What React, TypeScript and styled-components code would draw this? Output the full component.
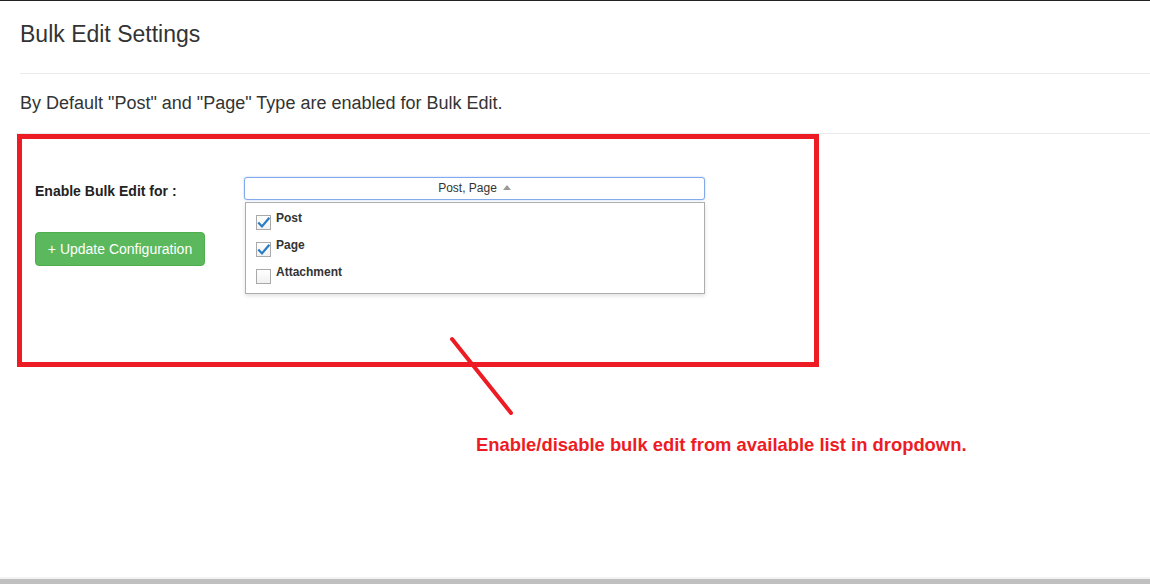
import React from "react";
import styled, { createGlobalStyle } from "styled-components";

const GlobalStyle = createGlobalStyle`
  html, body { margin: 0; padding: 0; background: #ffffff; }
  body { font-family: "Liberation Sans", Arial, sans-serif; color: #333; }
  * { box-sizing: border-box; }
`;

const Page = styled.div`
  position: relative;
  height: 584px;
  border-top: 1px solid #222;
  display: flex;
  flex-direction: column;
  overflow: hidden;
`;

const Title = styled.h1`
  margin: 20px 0 0 20px;
  font-size: 23px;
  line-height: 26px;
  font-weight: 400;
  color: #333;
`;

const Divider = styled.div<{ $top: number; $left: number }>`
  height: 1px;
  background: #eaeaea;
  margin-top: ${(p) => p.$top}px;
  margin-left: ${(p) => p.$left}px;
`;

const Intro = styled.p`
  margin: 18px 0 0 20px;
  font-size: 18px;
  line-height: 22px;
  color: #333;
`;

const HighlightBox = styled.section`
  margin-left: 17px;
  width: 802px;
  height: 233px;
  border: 5px solid #ed1c24;
  display: flex;
`;

const LeftColumn = styled.div`
  width: 222px;
  padding-left: 13px;
  display: flex;
  flex-direction: column;
  align-items: flex-start;
`;

const FieldLabel = styled.label`
  margin-top: 42px;
  font-size: 14px;
  line-height: 20px;
  font-weight: 700;
  color: #222;
`;

const UpdateButton = styled.button`
  margin-top: 31px;
  width: 170px;
  height: 34px;
  border: 1px solid #4cae4c;
  border-radius: 4px;
  background: #5cb85c;
  color: #fff;
  font-family: "Liberation Sans", Arial, sans-serif;
  font-size: 14px;
  padding: 0;
  cursor: pointer;
`;

const SelectWrap = styled.div`
  position: relative;
  padding-top: 38px;
  width: 461px;
`;

const SelectButton = styled.button`
  width: 461px;
  height: 23px;
  border: 1px solid #82a9ea;
  border-radius: 3px;
  box-shadow: 0 0 2px rgba(110, 160, 235, 0.55);
  background: #fff;
  display: flex;
  align-items: center;
  justify-content: center;
  gap: 6px;
  padding: 0 0 2px 0;
  font-family: "Liberation Sans", Arial, sans-serif;
  font-size: 12px;
  color: #333;
`;

const Caret = styled.span`
  width: 0;
  height: 0;
  border-left: 4.5px solid transparent;
  border-right: 4.5px solid transparent;
  border-bottom: 5px solid #9a9a9a;
`;

const Menu = styled.ul`
  position: absolute;
  top: 63px;
  left: 1px;
  width: 460px;
  height: 92px;
  margin: 0;
  padding: 8px 10px 9px 10px;
  list-style: none;
  background: #fff;
  border: 1px solid #adadad;
  box-shadow: 0 2px 4px rgba(0, 0, 0, 0.12);
  display: flex;
  flex-direction: column;
  gap: 8px;
`;

const MenuItem = styled.li`
  display: flex;
  align-items: flex-start;
  gap: 5px;
  height: 19px;
`;

const Box = styled.span<{ $checked: boolean }>`
  margin-top: 4px;
  width: 15px;
  height: 15px;
  border: 1px solid #a9a9a9;
  background: linear-gradient(#ffffff, #f1f1f1);
  display: flex;
  align-items: center;
  justify-content: center;
`;

const ItemText = styled.span`
  font-size: 12px;
  line-height: 14px;
  font-weight: 700;
  color: #333;
`;

const Note = styled.p`
  margin: 67px 0 0 476px;
  font-size: 18.4px;
  line-height: 22px;
  font-weight: 700;
  color: #ed1c24;
  white-space: nowrap;
`;

const Pointer = styled.svg`
  position: absolute;
  left: 440px;
  top: 325px;
`;

const Footer = styled.div`
  margin-top: auto;
  height: 7px;
  border-top: 2px solid #f3f3f3;
  background: #c0c0c0;
`;

const Check = () => (
  <svg width="13" height="13" viewBox="0 0 13 13">
    <path
      d="M2 7.2 L5 10.4 L11.6 2.6"
      fill="none"
      stroke="#2a7dc4"
      strokeWidth="2.2"
      strokeLinecap="square"
    />
  </svg>
);

const items = [
  { label: "Post", checked: true },
  { label: "Page", checked: true },
  { label: "Attachment", checked: false },
];

export default function App() {
  return (
    <>
      <GlobalStyle />
      <Page>
        <Title>Bulk Edit Settings</Title>
        <Divider $top={26} $left={20} />
        <Intro>By Default "Post" and "Page" Type are enabled for Bulk Edit.</Intro>
        <Divider $top={19} $left={17} />
        <HighlightBox>
          <LeftColumn>
            <FieldLabel>Enable Bulk Edit for :</FieldLabel>
            <UpdateButton>+ Update Configuration</UpdateButton>
          </LeftColumn>
          <SelectWrap>
            <SelectButton>
              <span>Post, Page</span>
              <Caret />
            </SelectButton>
            <Menu>
              {items.map((it) => (
                <MenuItem key={it.label}>
                  <Box $checked={it.checked}>{it.checked && <Check />}</Box>
                  <ItemText>{it.label}</ItemText>
                </MenuItem>
              ))}
            </Menu>
          </SelectWrap>
        </HighlightBox>
        <Note>Enable/disable bulk edit from available list in dropdown.</Note>
        <Pointer width="90" height="100" viewBox="0 0 90 100">
          <line x1="12" y1="13" x2="71" y2="87" stroke="#ed1c24" strokeWidth="4" strokeLinecap="round" />
        </Pointer>
        <Footer />
      </Page>
    </>
  );
}
